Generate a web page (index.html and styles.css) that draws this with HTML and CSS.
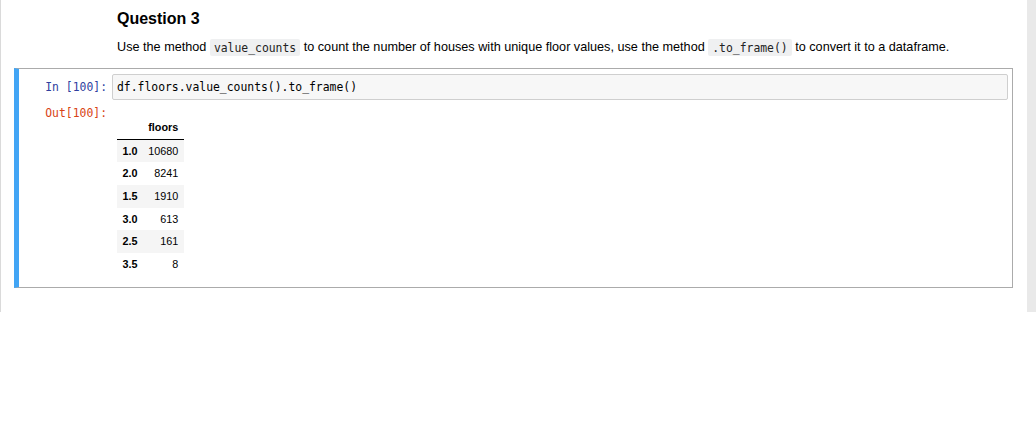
FILE: index.html
```html
<!DOCTYPE html>
<html>
<head>
<meta charset="utf-8">
<link rel="stylesheet" href="styles.css">
</head>
<body>
<div class="page">
  <div class="edge-left"></div>
  <div class="container">
    <div class="md-cell">
      <h3 class="md-title">Question 3</h3>
      <p class="md-text">Use the method <code class="inline-code">value_counts</code> to count the number of houses with unique floor values, use the method <code class="inline-code">.to_frame()</code> to convert it to a dataframe.</p>
    </div>
    <div class="code-cell">
      <div class="row">
        <div class="prompt in-prompt">In&nbsp;[100]:</div>
        <div class="input-box">df.floors.value_counts().to_frame()</div>
      </div>
      <div class="row">
        <div class="prompt out-prompt">Out[100]:</div>
        <div class="output">
          <table class="df">
            <thead>
              <tr><th></th><th class="col">floors</th></tr>
            </thead>
            <tbody>
              <tr><th>1.0</th><td>10680</td></tr>
              <tr><th>2.0</th><td>8241</td></tr>
              <tr><th>1.5</th><td>1910</td></tr>
              <tr><th>3.0</th><td>613</td></tr>
              <tr><th>2.5</th><td>161</td></tr>
              <tr><th>3.5</th><td>8</td></tr>
            </tbody>
          </table>
        </div>
      </div>
    </div>
  </div>
  <div class="edge-right"></div>
</div>
</body>
</html>
```
FILE: styles.css
```css
html, body {
  margin: 0;
  padding: 0;
  background: #ffffff;
}
body {
  font-family: "Liberation Sans", Arial, sans-serif;
  color: #000;
}
.page {
  display: flex;
  height: 312px;
}
.edge-left {
  width: 1px;
  background: #dadada;
}
.edge-right {
  width: 9px;
  background: #e9e9e9;
}
.container {
  flex: 1;
  background: #fff;
}
.md-cell {
  padding: 9px 0 0 116px;
}
.md-title {
  margin: 0;
  font-size: 16px;
  line-height: 19px;
  font-weight: bold;
}
.md-text {
  margin: 10px 0 0 0;
  font-size: 12.66px;
  line-height: 18px;
}
.inline-code {
  font-family: "DejaVu Sans Mono", monospace;
  font-size: 11.4px;
  background: #eff0f1;
  padding: 1.5px 4px;
  border-radius: 2px;
  color: #222;
}
.code-cell {
  margin: 12px 14px 0 13px;
  border: 1px solid #ababab;
  border-left: 5px solid #42a5f5;
  padding: 5px 4px 11px 5px;
}
.row {
  display: flex;
  align-items: flex-start;
}
.prompt {
  width: 88px;
  flex: none;
  box-sizing: border-box;
  padding-right: 5px;
  text-align: right;
  font-family: "DejaVu Sans Mono", monospace;
  font-size: 11.4px;
  line-height: 16px;
}
.in-prompt {
  color: #303f9f;
  padding-top: 5px;
}
.out-prompt {
  color: #d84315;
  padding-top: 5px;
}
.input-box {
  flex: 1;
  background: #f7f7f7;
  border: 1px solid #cfcfcf;
  border-radius: 2px;
  padding: 4px 4px;
  font-family: "DejaVu Sans Mono", monospace;
  font-size: 11.4px;
  line-height: 16px;
  color: #000;
}
.output {
  flex: 1;
  padding: 16px 0 0 5px;
}
.df {
  border-collapse: collapse;
  border-spacing: 0;
  font-size: 10.8px;
  color: #000;
}
.df th, .df td {
  padding: 5px 5.4px;
  line-height: 12.67px;
  text-align: right;
  white-space: nowrap;
}
.df thead th {
  border-bottom: 1px solid #000;
  font-weight: bold;
}
.df tbody th {
  font-weight: bold;
  text-align: left;
}
.df tbody td {
  font-weight: normal;
}
.df tbody tr:nth-child(odd) {
  background: #f5f5f5;
}
```
